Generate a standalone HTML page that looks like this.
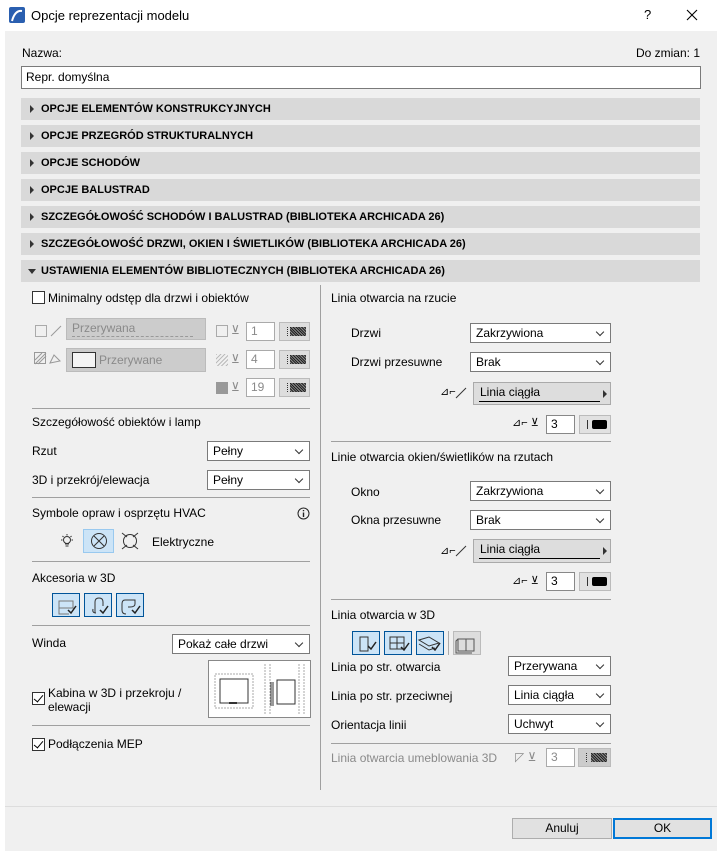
<!DOCTYPE html>
<html><head><meta charset="utf-8"><style>
*{box-sizing:border-box;margin:0;padding:0}
body{width:717px;height:851px;background:#f0f0f0;font-family:"Liberation Sans",sans-serif;font-size:12px;color:#000;position:relative;overflow:hidden}
.a{position:absolute}
.t{position:absolute;white-space:nowrap;line-height:14px}
.hd{position:absolute;left:21px;width:679px;height:22px;background:#d9d9d9;font-weight:bold;font-size:11px;line-height:22px;padding-left:20px}
.hd:before{content:"";position:absolute;left:9px;top:7px;border-left:4px solid #333;border-top:4px solid transparent;border-bottom:4px solid transparent}
.hd.o:before{left:7px;top:9px;border-top:5px solid #333;border-left:4px solid transparent;border-right:4px solid transparent;border-bottom:0}
.sel{position:absolute;background:#fff;border:1px solid #7a7a7a;height:20px;line-height:18px;padding-left:5px}
.sel:after{content:"";position:absolute;right:7px;top:5px;width:5px;height:5px;border-right:1px solid #333;border-bottom:1px solid #333;transform:rotate(45deg)}
.hr{position:absolute;height:1px;background:#a0a0a0}
.cb{position:absolute;width:13px;height:13px;border:1px solid #333;background:#fff}
.cb.c:after{content:"";position:absolute;left:3px;top:0px;width:4px;height:8px;border-right:1.5px solid #000;border-bottom:1.5px solid #000;transform:rotate(40deg)}
.in{position:absolute;background:#fff;border:1px solid #aaa;height:19px;line-height:17px;padding-left:4px}
.pb{position:absolute;background:#ddd;border:1px solid #bbb;height:19px}
.pb i{position:absolute;left:7px;top:4px;width:1px;height:9px;border-left:1px dotted #333}
.pb b{position:absolute;right:3px;top:4px;width:16px;height:9px;background:repeating-linear-gradient(45deg,#222 0 1px,#888 1px 2px)}
.ib{position:absolute;width:28px;height:24px;background:#cce4f7;border:1px solid #005499}
.g{color:#8a8a8a}
</style></head><body>
<div class="a" style="left:0;top:0;width:717px;height:31px;background:#fff"></div>
<svg class="a" style="left:9px;top:7px" width="16" height="16"><rect width="16" height="16" rx="2" fill="#2a5fb0"/><path d="M3 14 Q6 3 13 4" stroke="#fff" stroke-width="2" fill="none"/></svg>
<div class="t" style="left:31px;top:9px;font-size:13px">Opcje reprezentacji modelu</div>
<div class="t" style="left:644px;top:8px;font-size:13px">?</div>
<svg class="a" style="left:686px;top:9px" width="12" height="12"><path d="M1 1L11 11M11 1L1 11" stroke="#000" stroke-width="1.1"/></svg>
<div class="a" style="left:0;top:31px;width:5px;height:820px;background:#fff"></div>
<div class="t" style="left:22px;top:46px">Nazwa:</div>
<div class="t" style="right:17px;top:46px">Do zmian: 1</div>
<div class="in" style="left:21px;top:66px;width:680px;height:23px;border-color:#7a7a7a;line-height:21px">Repr. domyślna</div>
<div class="hd" style="top:98px">OPCJE ELEMENTÓW KONSTRUKCYJNYCH</div>
<div class="hd" style="top:125px">OPCJE PRZEGRÓD STRUKTURALNYCH</div>
<div class="hd" style="top:152px">OPCJE SCHODÓW</div>
<div class="hd" style="top:179px">OPCJE BALUSTRAD</div>
<div class="hd" style="top:206px">SZCZEGÓŁOWOŚĆ SCHODÓW I BALUSTRAD (BIBLIOTEKA ARCHICADA 26)</div>
<div class="hd" style="top:233px">SZCZEGÓŁOWOŚĆ DRZWI, OKIEN I ŚWIETLIKÓW (BIBLIOTEKA ARCHICADA 26)</div>
<div class="hd o" style="top:260px">USTAWIENIA ELEMENTÓW BIBLIOTECZNYCH (BIBLIOTEKA ARCHICADA 26)</div>
<div class="a" style="left:320px;top:285px;width:1px;height:505px;background:#a0a0a0"></div>

<!-- left -->
<div class="cb" style="left:32px;top:291px"></div>
<div class="t" style="left:48px;top:291px">Minimalny odstęp dla drzwi i obiektów</div>
<div class="a" style="left:35px;top:325px;width:12px;height:12px;border:1px solid #aaa"></div>
<svg class="a" style="left:50px;top:325px" width="12" height="12"><path d="M1 11L11 1" stroke="#999"/></svg>
<div class="a g" style="left:66px;top:318px;width:140px;height:22px;background:#ccc;border:1px solid #bbb;padding-left:5px;line-height:18px">Przerywana<div class="a" style="left:5px;right:12px;top:17px;border-top:1px dashed #999"></div></div>
<svg class="a" style="left:34px;top:352px" width="28" height="14"><rect x="0.5" y="0.5" width="11" height="11" fill="none" stroke="#999"/><path d="M1 8 L8 1 M1 12 L12 1 M4 12 L12 4" stroke="#999"/><path d="M16 11 L20 3 L26 9 Z" fill="none" stroke="#999"/></svg>
<div class="a g" style="left:66px;top:348px;width:140px;height:24px;background:#ccc;border:1px solid #bbb;line-height:22px;padding-left:32px">Przerywane<div class="a" style="left:5px;top:3px;width:24px;height:16px;border:1px solid #333;background:#f4f4f4"></div></div>
<div class="a" style="left:216px;top:325px;width:12px;height:12px;border:1px solid #aaa"></div>
<div class="a" style="left:216px;top:354px;width:12px;height:12px;background:repeating-linear-gradient(135deg,#bbb 0 1px,transparent 1px 3px)"></div>
<div class="a" style="left:216px;top:382px;width:12px;height:12px;background:#999"></div>
<div class="t g" style="left:231px;top:323px">⊻</div><div class="t g" style="left:231px;top:352px">⊻</div><div class="t g" style="left:231px;top:380px">⊻</div>
<div class="in g" style="left:246px;top:322px;width:29px">1</div>
<div class="in g" style="left:246px;top:350px;width:29px">4</div>
<div class="in g" style="left:246px;top:378px;width:29px">19</div>
<div class="pb" style="left:279px;top:322px;width:31px"><i></i><b></b></div>
<div class="pb" style="left:279px;top:350px;width:31px"><i></i><b></b></div>
<div class="pb" style="left:279px;top:378px;width:31px"><i></i><b></b></div>
<div class="hr" style="left:32px;top:408px;width:278px"></div>
<div class="t" style="left:32px;top:415px">Szczegółowość obiektów i lamp</div>
<div class="t" style="left:32px;top:444px">Rzut</div>
<div class="sel" style="left:207px;top:441px;width:103px">Pełny</div>
<div class="t" style="left:32px;top:473px">3D i przekrój/elewacja</div>
<div class="sel" style="left:207px;top:470px;width:103px">Pełny</div>
<div class="hr" style="left:32px;top:497px;width:278px"></div>
<div class="t" style="left:32px;top:506px">Symbole opraw i osprzętu HVAC</div>
<svg class="a" style="left:297px;top:507px" width="13" height="13"><circle cx="6.5" cy="6.5" r="5.5" fill="none" stroke="#222"/><path d="M6.5 5.5V10M6.5 3v1.2" stroke="#222" stroke-width="1.4"/></svg>
<svg class="a" style="left:58px;top:533px" width="18" height="18"><circle cx="9" cy="7" r="3.5" fill="none" stroke="#333"/><path d="M7 11h4M7.5 13h3M9 1v1.5M3 7h1.5M13.5 7H15M4.5 3l1 1M13.5 3l-1 1" stroke="#333"/></svg>
<div class="ib" style="left:83px;top:529px;width:31px;height:24px;border-color:#99c9ef"></div>
<svg class="a" style="left:89px;top:531px" width="20" height="20"><circle cx="10" cy="10" r="7.5" fill="none" stroke="#333"/><path d="M5 5L15 15M15 5L5 15" stroke="#333"/></svg>
<svg class="a" style="left:119px;top:531px" width="22" height="20"><circle cx="11" cy="10" r="6.5" fill="none" stroke="#333"/><path d="M3 2L8 6M19 2L14 6M3 18L8 14M19 18L14 14" stroke="#333"/></svg>
<div class="t" style="left:152px;top:535px">Elektryczne</div>
<div class="hr" style="left:32px;top:561px;width:278px"></div>
<div class="t" style="left:32px;top:571px">Akcesoria w 3D</div>
<div class="ib" style="left:52px;top:593px"></div><div class="ib" style="left:84px;top:593px"></div><div class="ib" style="left:116px;top:593px"></div>
<svg class="a" style="left:55px;top:596px" width="90" height="20"><path d="M4 5h14v7H4zM4 12v6h10" fill="none" stroke="#777"/><path d="M13 14l3 3 5-7" fill="none" stroke="#222" stroke-width="1.5"/><path d="M40 17V6q0-4 4-4t4 4v4M38 13q-1 4 3 4" fill="none" stroke="#333"/><path d="M45 14l3 3 5-7" fill="none" stroke="#222" stroke-width="1.5"/><path d="M70 4h10v4q0 3-5 3h-2M70 4q-3 0-3 4v6q0 4 4 4" fill="none" stroke="#333"/><path d="M77 14l3 3 5-7" fill="none" stroke="#222" stroke-width="1.5"/></svg>
<div class="hr" style="left:32px;top:625px;width:278px"></div>
<div class="t" style="left:32px;top:636px">Winda</div>
<div class="sel" style="left:172px;top:634px;width:138px">Pokaż całe drzwi</div>
<div class="a" style="left:208px;top:660px;width:103px;height:58px;background:#fff;border:1px solid #888"></div>
<svg class="a" style="left:213px;top:664px" width="94" height="50"><rect x="2" y="10" width="38" height="34" fill="none" stroke="#aaa" stroke-dasharray="2 1"/><rect x="7" y="15" width="28" height="24" fill="none" stroke="#333"/><path d="M16 39h8" stroke="#333" stroke-width="2"/><path d="M52 0v50M57 0v50M86 0v50M91 0v50" stroke="#aaa" stroke-dasharray="2 1"/><rect x="64" y="16" width="18" height="24" fill="none" stroke="#333"/><path d="M58 18v24M60 18v24" stroke="#333"/></svg>
<div class="cb c" style="left:32px;top:692px"></div>
<div class="t" style="left:48px;top:686px">Kabina w 3D i przekroju /</div>
<div class="t" style="left:48px;top:700px">elewacji</div>
<div class="hr" style="left:32px;top:725px;width:278px"></div>
<div class="cb c" style="left:32px;top:738px"></div>
<div class="t" style="left:48px;top:737px">Podłączenia MEP</div>

<!-- right -->
<div class="t" style="left:331px;top:291px">Linia otwarcia na rzucie</div>
<div class="t" style="left:351px;top:326px">Drzwi</div>
<div class="sel" style="left:470px;top:323px;width:141px">Zakrzywiona</div>
<div class="t" style="left:351px;top:355px">Drzwi przesuwne</div>
<div class="sel" style="left:470px;top:352px;width:141px">Brak</div>
<div class="t" style="left:440px;top:385px;font-size:11px">⊿⌐</div>
<svg class="a" style="left:455px;top:387px" width="12" height="12"><path d="M1 11L11 1" stroke="#333"/></svg>
<div class="a" style="left:473px;top:382px;width:138px;height:23px;background:#ddd;border:1px solid #aaa;padding-left:6px;line-height:18px">Linia ciągła<div class="a" style="left:5px;right:10px;top:18px;border-top:1px solid #000"></div><div class="a" style="right:3px;top:7px;border-left:4px solid #333;border-top:4px solid transparent;border-bottom:4px solid transparent"></div></div>
<div class="t" style="left:512px;top:416px;font-size:11px">⊿⌐ ⊻</div>
<div class="in" style="left:546px;top:415px;width:29px;border-color:#888">3</div>
<div class="pb" style="left:579px;top:415px;width:32px;background:#e1e1e1"><i style="border-left:1px solid #333"></i><b style="background:#000;border-radius:2px;width:15px"></b></div>
<div class="hr" style="left:331px;top:441px;width:280px"></div>
<div class="t" style="left:331px;top:450px">Linie otwarcia okien/świetlików na rzutach</div>
<div class="t" style="left:351px;top:485px">Okno</div>
<div class="sel" style="left:470px;top:481px;width:141px">Zakrzywiona</div>
<div class="t" style="left:351px;top:513px">Okna przesuwne</div>
<div class="sel" style="left:470px;top:510px;width:141px">Brak</div>
<div class="t" style="left:440px;top:544px;font-size:11px">⊿⌐</div>
<svg class="a" style="left:455px;top:545px" width="12" height="12"><path d="M1 11L11 1" stroke="#333"/></svg>
<div class="a" style="left:473px;top:539px;width:138px;height:24px;background:#ddd;border:1px solid #aaa;padding-left:6px;line-height:18px">Linia ciągła<div class="a" style="left:5px;right:10px;top:18px;border-top:1px solid #000"></div><div class="a" style="right:3px;top:7px;border-left:4px solid #333;border-top:4px solid transparent;border-bottom:4px solid transparent"></div></div>
<div class="t" style="left:512px;top:574px;font-size:11px">⊿⌐ ⊻</div>
<div class="in" style="left:546px;top:572px;width:29px;border-color:#888">3</div>
<div class="pb" style="left:579px;top:572px;width:32px;background:#e1e1e1"><i style="border-left:1px solid #333"></i><b style="background:#000;border-radius:2px;width:15px"></b></div>
<div class="hr" style="left:331px;top:599px;width:280px"></div>
<div class="t" style="left:331px;top:608px">Linia otwarcia w 3D</div>
<div class="ib" style="left:352px;top:631px"></div><div class="ib" style="left:384px;top:631px"></div><div class="ib" style="left:416px;top:631px"></div>
<div class="a" style="left:448px;top:631px;width:1px;height:24px;background:#aaa"></div>
<div class="a" style="left:453px;top:631px;width:28px;height:24px;background:#ddd;border:1px solid #bbb"></div>
<svg class="a" style="left:355px;top:634px" width="124" height="20"><path d="M5 3h8v14H5z" fill="none" stroke="#333"/><path d="M13 12l3 3 5-7" fill="none" stroke="#222" stroke-width="1.5"/><path d="M35 3h14v12H35zM42 3v12M35 9h14" fill="none" stroke="#333"/><path d="M46 13l3 3 5-7" fill="none" stroke="#222" stroke-width="1.5"/><path d="M64 6l10-3 10 6-10 3zM64 10l10 6 6-2" fill="none" stroke="#333"/><path d="M77 13l3 3 5-7" fill="none" stroke="#222" stroke-width="1.5"/><path d="M103 5h16v12h-16zM111 5v12M103 5l-2 2v12h16" fill="none" stroke="#555"/></svg>
<div class="t" style="left:331px;top:660px">Linia po str. otwarcia</div>
<div class="sel" style="left:508px;top:656px;width:103px">Przerywana</div>
<div class="t" style="left:331px;top:689px">Linia po str. przeciwnej</div>
<div class="sel" style="left:508px;top:685px;width:103px">Linia ciągła</div>
<div class="t" style="left:331px;top:718px">Orientacja linii</div>
<div class="sel" style="left:508px;top:714px;width:103px">Uchwyt</div>
<div class="hr" style="left:331px;top:743px;width:280px"></div>
<div class="t g" style="left:331px;top:751px">Linia otwarcia umeblowania 3D</div>
<div class="t g" style="left:515px;top:750px">◸ ⊻</div>
<div class="in g" style="left:546px;top:748px;width:29px">3</div>
<div class="pb" style="left:578px;top:748px;width:33px;background:#ccc"><i></i><b></b></div>

<div class="a" style="left:5px;top:806px;width:712px;height:1px;background:#ddd"></div>
<div class="a" style="left:512px;top:818px;width:100px;height:21px;background:#e1e1e1;border:1px solid #adadad;text-align:center;line-height:19px">Anuluj</div>
<div class="a" style="left:613px;top:818px;width:99px;height:21px;background:#e1e1e1;border:2px solid #0078d7;text-align:center;line-height:17px">OK</div>
</body></html>
